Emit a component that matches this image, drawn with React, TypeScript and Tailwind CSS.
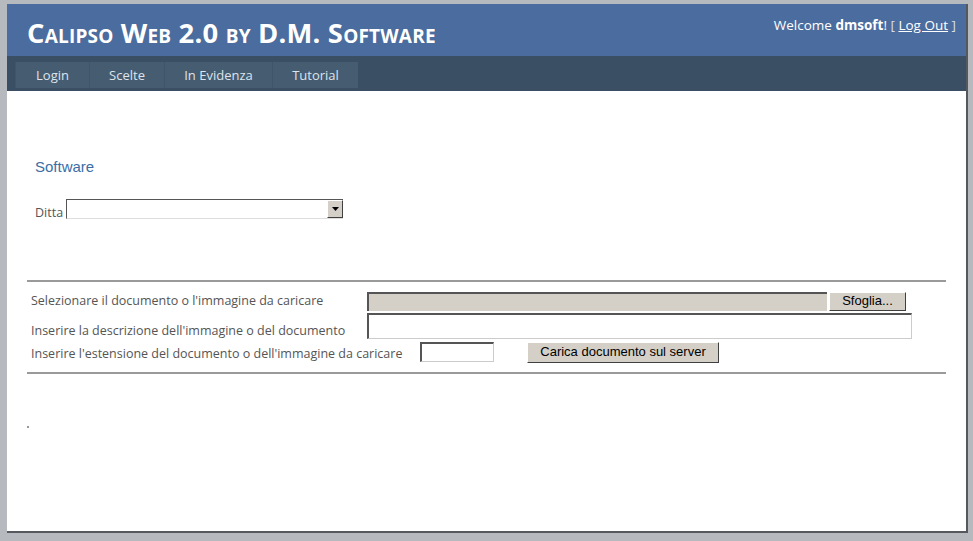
export default function App() {
  const tabs = ["Login", "Scelte", "In Evidenza", "Tutorial"];
  const tabW = ["w-[74px]", "w-[75px]", "w-[108px]", "w-[86px]"];
  return (
    <div className="w-[973px] h-[541px] bg-[#b6b9bd] pl-[7px] pt-[4px] overflow-hidden">
      <div
        className="w-[961px] h-[529px] bg-white border-r-2 border-b-2 border-[#55585c] flex flex-col"
        style={{ fontFamily: '"Open Sans", "DejaVu Sans", sans-serif' }}
      >
        {/* header */}
        <div className="h-[52px] bg-[#4b6c9e] flex items-start justify-between">
          <h1
            className="pl-[20px] pt-[12px] text-white font-bold text-[27.4px] leading-[34px] tracking-[0.2px]"
            style={{ fontVariant: "small-caps" }}
          >
            Calipso Web 2.0 by D.M. Software
          </h1>
          <div className="pt-[12px] pr-[10px] text-[13.5px] text-white leading-[18px]">
            Welcome <span className="font-bold">dmsoft</span>!{" "}
            <span className="text-[#d7dfec]">[</span> <span className="underline">Log Out</span>{" "}
            <span className="text-[#d7dfec]">]</span>
          </div>
        </div>
        {/* nav */}
        <div className="h-[35px] bg-[#3a4f63] pl-[8px] pt-[6px] flex">
          {tabs.map((t, i) => (
            <div
              key={t}
              className={`${tabW[i]} h-[26px] bg-[#465c71] border-l border-[#3f5569] text-[#dde4ec] text-[13px] flex items-center justify-center pt-[1px]`}
            >
              {t}
            </div>
          ))}
        </div>
        {/* content */}
        <div className="flex-1 px-[20px] pt-[66px]">
          <div className="pl-[8px] text-[#3a6ea5] text-[15px] leading-[20px]" style={{ fontFamily: '"Liberation Sans", Arial, sans-serif' }}>
            Software
          </div>
          <div className="pl-[8px] mt-[22px] flex items-end text-[12.5px] text-[#555]">
            <span className="leading-[14px] mb-[-1px]">Ditta</span>
            <div className="ml-[3px] w-[277px] h-[20px] border-t border-l border-[#555] border-b border-b-[#ddd] bg-white flex justify-end">
              <div className="w-[16px] h-[18px] bg-[#d4d0c8] border border-t-white border-l-white border-r-[#404040] border-b-[#404040] flex items-center justify-center">
                <svg width="7" height="4" viewBox="0 0 7 4">
                  <path d="M0 0h7L3.5 4z" fill="#000" />
                </svg>
              </div>
            </div>
          </div>
          <div className="mt-[61px] border-t-2 border-[#9a9a9a]" />
          <div className="pl-[4px] pt-[9px] text-[12.5px] text-[#555]">
            <div className="flex items-center h-[20px]">
              <span className="w-[336px]">Selezionare il documento o l'immagine da caricare</span>
              <div className="w-[460px] h-[19px] bg-[#d4d0c8] border-t-2 border-l-2 border-[#555]" />
              <button
                className="ml-[2px] w-[77px] h-[19px] bg-[#d4d0c8] border border-t-white border-l-white border-r-[#404040] border-b-[#404040] text-black text-[13px] leading-[16px]"
                style={{ fontFamily: '"Liberation Sans", Arial, sans-serif' }}
              >
                Sfoglia...
              </button>
            </div>
            <div className="flex items-end h-[29px] pb-[1px]">
              <span className="w-[336px] leading-[16px]">Inserire la descrizione dell'immagine o del documento</span>
              <div className="w-[545px] h-[26px] bg-white border-t-2 border-l-2 border-[#555] border-r border-b border-r-[#ccc] border-b-[#ccc]" />
            </div>
            <div className="flex items-center h-[24px]">
              <span className="w-[389px] pt-[4px]">Inserire l'estensione del documento o dell'immagine da caricare</span>
              <div className="w-[74px] h-[20px] bg-white border-t-2 border-l-2 border-[#555] border-r border-b border-r-[#ccc] border-b-[#ccc]" />
              <button
                className="ml-[33px] w-[192px] h-[21px] bg-[#d4d0c8] border border-t-white border-l-white border-r-[#404040] border-b-[#404040] text-black text-[13px] leading-[16px]"
                style={{ fontFamily: '"Liberation Sans", Arial, sans-serif' }}
              >
                Carica documento sul server
              </button>
            </div>
          </div>
          <div className="mt-[8px] border-t-2 border-[#9a9a9a]" />
          <div className="mt-[52px] w-[2px] h-[2px] bg-[#999]" />
        </div>
      </div>
    </div>
  );
}
